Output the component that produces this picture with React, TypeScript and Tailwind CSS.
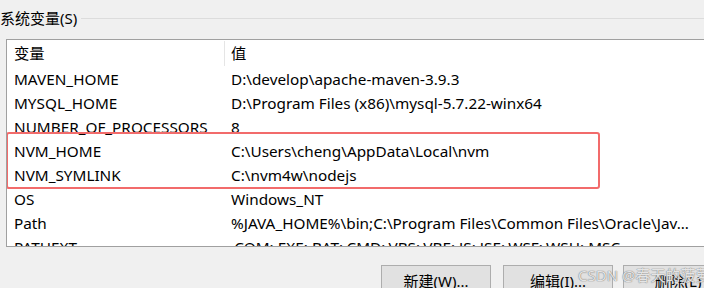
import React from 'react';

const rows: [string, string][] = [
  ['MAVEN_HOME', 'D:\\develop\\apache-maven-3.9.3'],
  ['MYSQL_HOME', 'D:\\Program Files (x86)\\mysql-5.7.22-winx64'],
  ['NUMBER_OF_PROCESSORS', '8'],
  ['NVM_HOME', 'C:\\Users\\cheng\\AppData\\Local\\nvm'],
  ['NVM_SYMLINK', 'C:\\nvm4w\\nodejs'],
  ['OS', 'Windows_NT'],
  ['Path', '%JAVA_HOME%\\bin;C:\\Program Files\\Common Files\\Oracle\\Jav...'],
  ['PATHEXT', '.COM;.EXE;.BAT;.CMD;.VBS;.VBE;.JS;.JSE;.WSF;.WSH;.MSC'],
];

const font = "font-['Noto_Sans','Noto_Sans_CJK_SC',sans-serif]";

function Row({ name, value }: { name: string; value: string }) {
  return (
    <div className="flex h-[24px] items-center whitespace-nowrap">
      <div className="w-[218px] pl-[7px]">{name}</div>
      <div className="pl-[6px]">{value}</div>
    </div>
  );
}

export default function App() {
  return (
    <div className={`relative w-[704px] h-[288px] overflow-hidden bg-[#f0f0f0] text-[15px] text-black ${font}`}>
      {/* group title */}
      <div className="flex items-center pt-[8px]">
        <span className="leading-[20px] whitespace-nowrap">系统变量(S)</span>
        <div className="flex-1 h-px bg-[#dcdcdc] ml-[4px]" />
      </div>

      {/* list */}
      <div className="mt-[11px] ml-[6px] w-[740px] h-[208px] border border-[#a0a0a0] bg-white overflow-hidden text-[15.3px]">
        <div className="flex h-[27px] items-center">
          <div className="w-[218px] h-[25px] pl-[7px] flex items-center border-r border-[#e5e5e5]">变量</div>
          <div className="pl-[6px]">值</div>
        </div>
        {rows.slice(0, 3).map(([n, v]) => (
          <Row key={n} name={n} value={v} />
        ))}
        <div className="relative">
          {rows.slice(3, 5).map(([n, v]) => (
            <Row key={n} name={n} value={v} />
          ))}
          <span className="absolute left-[-1px] top-[-7px] bottom-[-2px] w-[594px] border-2 border-[#f26b6b] rounded-[3px]" />
        </div>
        {rows.slice(5).map(([n, v]) => (
          <Row key={n} name={n} value={v} />
        ))}
      </div>

      {/* buttons */}
      <div className="flex gap-[12px] mt-[18px] pl-[381px]">
        <button className="w-[110px] h-[30px] shrink-0 border border-[#adadad] bg-[#e1e1e1] leading-[30px]">新建(W)...</button>
        <button className="w-[110px] h-[30px] shrink-0 border border-[#adadad] bg-[#e1e1e1] leading-[30px]">编辑(I)...</button>
        <button className="w-[110px] h-[30px] shrink-0 -ml-[2px] border border-[#adadad] bg-[#e1e1e1] leading-[30px]">删除(L)</button>
      </div>

      {/* watermark */}
      <span className="absolute left-[578px] top-[264px] text-[15px] text-white/80 whitespace-nowrap [text-shadow:0_0_1px_#777,0_0_1px_#777]">
        CSDN @春天的菠萝
      </span>
    </div>
  );
}
